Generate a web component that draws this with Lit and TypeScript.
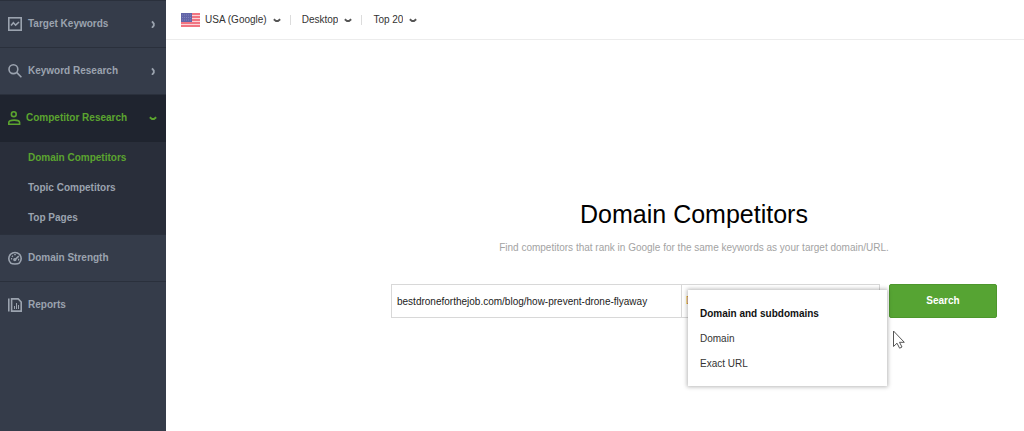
import { LitElement, html, css, svg, nothing } from "lit";
import { customElement, state } from "lit/decorators.js";
import { classMap } from "lit/directives/class-map.js";

const icons = {
  chart: svg`<rect x=".8" y=".8" width="12.400" height="12.400" /><path d="M3 8.600 5.400 5.800l2.200 2.400 3.400-3.200" />`,
  search: svg`<circle cx="5.400" cy="5.200" r="4.400" /><path d="m8.600 8.400 4.800 4.800" />`,
  person: svg`<circle cx="5.800" cy="3.200" r="2.400" /><path d="M.8 13.200h10.800v-1.600c0-1.700-2-2.500-5.400-2.500S.8 9.900.8 11.600z" />`,
  gauge: svg`<path d="M2.800 12.200a6.200 6.200 0 1 1 8.400 0c-1.300 1-7.100 1-8.400 0z" /><path d="m7 8.600 3.800-3.400M3 7.800h1.200M7 3v1.200M4 4.800l.9.800M10 8.600h1.200" /><circle cx="6.800" cy="8.600" r=".9" />`,
  report: svg`<path d="M.8.500v13M3.600.9h6.600L13.200 4v9.100H3.600z" /><path stroke-width="1" d="M6.500 11V8M8.500 11V5M10.500 11V7" />`,
};

const icon = (name: keyof typeof icons) =>
  html`<svg class="icon" viewBox="0 0 14 14" aria-hidden="true">${icons[name]}</svg>`;

const chevronDown = html`<svg class="chevron" viewBox="0 0 8 8" aria-hidden="true"><path d="M.8 3.200 3 5h2l2.200-1.800" /></svg>`;
const chevronRight = html`<svg class="chevron" viewBox="0 0 8 8" aria-hidden="true"><path d="M3 1.400 4.800 3.600v2L3 7.800" /></svg>`;

interface Section {
  label: string;
  icon: keyof typeof icons;
  expandable?: boolean;
  children?: string[];
}

const sections: Section[] = [
  { label: "Target Keywords", icon: "chart", expandable: true },
  { label: "Keyword Research", icon: "search", expandable: true },
  {
    label: "Competitor Research",
    icon: "person",
    expandable: true,
    children: ["Domain Competitors", "Topic Competitors", "Top Pages"],
  },
  { label: "Domain Strength", icon: "gauge" },
  { label: "Reports", icon: "report" },
];

@customElement("side-nav")
export class SideNav extends LitElement {
  static styles = css`
    :host {
      display: block;
      background: #353c4a;
      color: #9ba3af;
      font-weight: bold;
    }
    ul {
      list-style: none;
      margin: 0;
      padding: 0;
    }
    a {
      color: inherit;
      text-decoration: none;
    }
    .section {
      display: flex;
      align-items: center;
      gap: 6px;
      height: 46px;
      padding: 0 9px 0 8px;
      border-top: 1px solid #2a303c;
    }
    .section.open {
      background: #1f242f;
      color: #5ba42f;
      gap: 4px;
    }
    .label {
      flex: 1;
    }
    .icon {
      width: 14px;
      height: 14px;
      fill: none;
      stroke: currentColor;
      stroke-width: 1.6;
    }
    .chevron {
      width: 8px;
      height: 8px;
      fill: none;
      stroke: currentColor;
      stroke-width: 1.8;
    }
    .children {
      background: #292e3a;
      border-top: 1px solid #1f242e;
      padding: 1px 0;
    }
    .child {
      display: block;
      padding: 0 28px;
      line-height: 30px;
    }
    .child.current {
      color: #5ba42f;
    }
  `;

  render() {
    return html`<nav aria-label="Tools">
      <ul>
        ${sections.map((s) => {
          const open = !!s.children;
          return html`<li>
            <a href="#" class=${classMap({ section: true, open })}>
              ${icon(s.icon)}<span class="label">${s.label}</span>
              ${s.expandable ? (open ? chevronDown : chevronRight) : nothing}
            </a>
            ${s.children
              ? html`<ul class="children">
                  ${s.children.map(
                    (c, i) => html`<li><a href="#" class=${classMap({ child: true, current: i === 0 })}>${c}</a></li>`
                  )}
                </ul>`
              : nothing}
          </li>`;
        })}
      </ul>
    </nav>`;
  }
}

@customElement("filter-bar")
export class FilterBar extends LitElement {
  static styles = css`
    :host {
      display: flex;
      align-items: center;
      height: 39px;
      padding: 0 15px;
      border-bottom: 1px solid #ececec;
    }
    .flag {
      width: 19px;
      height: 14px;
      margin-right: 5px;
    }
    .filter {
      display: flex;
      align-items: center;
      gap: 6px;
    }
    .filter + .filter {
      margin-left: 9px;
      padding-left: 12px;
      background: linear-gradient(#dcdcdc, #dcdcdc) left center / 1px 10px no-repeat;
    }
    select {
      appearance: none;
      field-sizing: content;
      border: 0;
      margin: 0;
      padding: 0;
      background: none;
      font: inherit;
      color: #333;
    }
    .chevron {
      width: 8px;
      height: 8px;
      fill: none;
      stroke: #555;
      stroke-width: 1.8;
    }
  `;

  private filter(name: string, value: string) {
    return html`<label class="filter">
      <select aria-label=${name}><option>${value}</option></select>${chevronDown}
    </label>`;
  }

  render() {
    return html`
      <svg class="flag" viewBox="0 0 19 14" aria-hidden="true">
        <rect width="19" height="14" fill="#fbd3d7" />
        <path d="M0 1h19M0 4h19M0 7h19M0 10h19M0 13h19" stroke="#ee5566" stroke-width="1.700" />
        <rect width="11" height="9" fill="#6265a8" />
        <path d="M1 2h9M1 4.500h9M1 7h9" stroke="#8a8cc2" stroke-width=".8" stroke-dasharray="1 1" />
      </svg>
      ${this.filter("Search engine", "USA (Google)")}
      ${this.filter("Device", "Desktop")}
      ${this.filter("Depth", "Top 20")}
    `;
  }
}

const scopes = ["Domain and subdomains", "Domain", "Exact URL"];

@customElement("domain-search")
export class DomainSearch extends LitElement {
  @state() private scope = scopes[0];

  static styles = css`
    :host {
      display: block;
      padding: 158px 27px 0 225px;
    }
    h1 {
      margin: 0;
      font-size: 25px;
      font-weight: normal;
      line-height: 32px;
      color: #000;
      text-align: center;
    }
    .hint {
      margin: 10px 0 0;
      line-height: 16px;
      color: #a3a3a3;
      text-align: center;
    }
    form {
      display: flex;
      margin-top: 28px;
      height: 34px;
    }
    input,
    .scope select {
      box-sizing: border-box;
      width: 100%;
      height: 100%;
      margin: 0;
      border: 1px solid #d8d8d8;
      border-radius: 0;
      padding: 0 5px;
      font: inherit;
      color: #222;
      background: #fff;
    }
    .target {
      flex: 1;
      min-width: 0;
    }
    .target input {
      border-right: 0;
    }
    .scope {
      position: relative;
      width: 199px;
      margin-right: 9px;
    }
    .scope select {
      appearance: none;
      padding: 0 4px;
      color: #d9982f;
    }
    .menu {
      position: absolute;
      top: 6px;
      left: 7px;
      right: -7px;
      margin: 0;
      padding: 11px 0 10px;
      list-style: none;
      background: #fff;
      box-shadow: 0 0 4px 1px rgba(0, 0, 0, 0.28);
    }
    .option {
      display: block;
      width: 100%;
      border: 0;
      padding: 0 12px;
      background: none;
      font: inherit;
      line-height: 25px;
      color: #333;
      text-align: left;
    }
    .option.selected {
      font-weight: bold;
      color: #111;
    }
    .search {
      width: 108px;
      border: 1px solid #4d972d;
      border-radius: 2px;
      padding: 0;
      background: #56a433;
      font: inherit;
      font-weight: bold;
      color: #fff;
    }
    .pointer {
      position: absolute;
      top: 46px;
      left: 211px;
      width: 13px;
      height: 19px;
    }
  `;

  render() {
    return html`
      <h1>Domain Competitors</h1>
      <p class="hint">Find competitors that rank in Google for the same keywords as your target domain/URL.</p>
      <form @submit=${(e: Event) => e.preventDefault()}>
        <label class="target">
          <input type="text" aria-label="Domain or URL" value="bestdroneforthejob.com/blog/how-prevent-drone-flyaway" />
        </label>
        <div class="scope">
          <select aria-label="Search scope" .value=${this.scope}>
            ${scopes.map((s) => html`<option>${s}</option>`)}
          </select>
          <ul class="menu">
            ${scopes.map(
              (s) => html`<li>
                <button
                  type="button"
                  class=${classMap({ option: true, selected: s === this.scope })}
                  @click=${() => (this.scope = s)}
                >${s}</button>
              </li>`
            )}
          </ul>
          <svg class="pointer" viewBox="0 0 13 19" aria-hidden="true">
            <path d="M1.500 1v15.500l3.500-3.300 2.600 5 2.400-1.200-2.500-4.700h4.800z" fill="#fff" stroke="#555" />
          </svg>
        </div>
        <button class="search" type="submit">Search</button>
      </form>
    `;
  }
}

@customElement("app-root")
export class AppRoot extends LitElement {
  static styles = css`
    :host {
      display: grid;
      grid-template-columns: 166px minmax(0, 1fr);
      min-height: 100vh;
      background: #fff;
      font: 10px/16px "Liberation Sans", Arial, sans-serif;
    }
  `;

  render() {
    return html`
      <side-nav></side-nav>
      <main>
        <filter-bar></filter-bar>
        <domain-search></domain-search>
      </main>
    `;
  }
}
